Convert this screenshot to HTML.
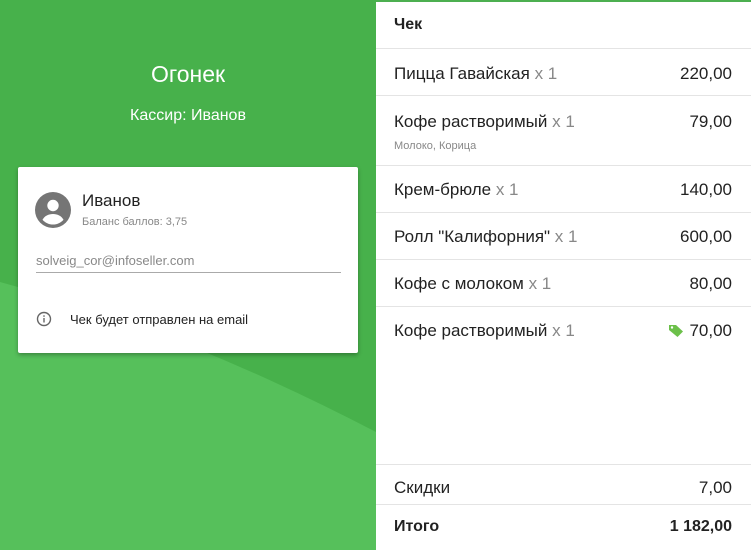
<!DOCTYPE html>
<html><head><meta charset="utf-8"><style>
*{margin:0;padding:0;box-sizing:border-box}
body{width:751px;height:550px;overflow:hidden;font-family:"Liberation Sans",sans-serif;position:relative;background:#fff}
.left{position:absolute;left:0;top:0;width:376px;height:550px;background:#47b14b;overflow:hidden}
.title{position:absolute;left:0;width:376px;text-align:center;color:#fff}
.card{position:absolute;left:18px;top:167px;width:340px;height:186px;background:#fff;border-radius:2px;box-shadow:0 2px 4px rgba(0,0,0,.3)}
.right{position:absolute;left:376px;top:0;width:375px;height:550px;background:#fff;border-top:2px solid #4caf50}
.row{position:absolute;left:0;width:375px;border-bottom:1px solid #e4e4e4}
.n{position:absolute;left:18px;font-size:17px;color:#222}
.n span{color:#888}
.p{position:absolute;right:19px;font-size:17px;color:#222}
</style></head><body>
<div class="left">
<svg width="376" height="550" style="position:absolute;left:0;top:0"><path d="M0 282 Q180 330 376 432 L376 550 L0 550Z" fill="#56c05b"/></svg>
<div class="title" style="top:61px;font-size:23px">Огонек</div>
<div class="title" style="top:107px;font-size:16px">Кассир: Иванов</div>
<div class="card">
<svg width="36" height="36" viewBox="0 0 24 24" style="position:absolute;left:17px;top:25px"><circle cx="12" cy="12" r="12" fill="#757575"/><circle cx="12" cy="9" r="3.8" fill="#fff"/><path d="M5 18.5c1.5-2.6 4.2-3.8 7-3.8s5.5 1.2 7 3.8c-1.8 2-4.3 3.2-7 3.2s-5.2-1.2-7-3.2z" fill="#fff"/></svg>
<div style="position:absolute;left:64px;top:24px;font-size:17px;color:#222">Иванов</div>
<div style="position:absolute;left:64px;top:49px;font-size:11px;color:#888">Баланс баллов: 3,75</div>
<div style="position:absolute;left:18px;top:86px;font-size:13px;color:#888">solveig_cor@infoseller.com</div>
<div style="position:absolute;left:18px;top:105px;width:305px;height:1px;background:#aaa"></div>
<svg width="16" height="16" viewBox="0 0 16 16" style="position:absolute;left:18px;top:144px"><circle cx="8" cy="8" r="6.5" fill="none" stroke="#666" stroke-width="1.4"/><rect x="7.3" y="7" width="1.4" height="4.5" fill="#666"/><rect x="7.3" y="4.3" width="1.4" height="1.5" fill="#666"/></svg>
<div style="position:absolute;left:52px;top:145px;font-size:13px;color:#222">Чек будет отправлен на email</div>
</div>
</div>
<div class="right">
<div class="row" style="top:0;height:47px"><div class="n" style="top:14px;font-weight:bold;font-size:16px">Чек</div></div>
<div class="row" style="top:47px;height:47px"><div class="n" style="top:15px">Пицца Гавайская <span>x 1</span></div><div class="p" style="top:15px">220,00</div></div>
<div class="row" style="top:94px;height:70px"><div class="n" style="top:16px">Кофе растворимый <span>x 1</span></div><div class="p" style="top:16px">79,00</div><div style="position:absolute;left:18px;top:44px;font-size:11px;color:#888">Молоко, Корица</div></div>
<div class="row" style="top:164px;height:47px"><div class="n" style="top:14px">Крем-брюле <span>x 1</span></div><div class="p" style="top:14px">140,00</div></div>
<div class="row" style="top:211px;height:47px"><div class="n" style="top:14px">Ролл "Калифорния" <span>x 1</span></div><div class="p" style="top:14px">600,00</div></div>
<div class="row" style="top:258px;height:47px"><div class="n" style="top:14px">Кофе с молоком <span>x 1</span></div><div class="p" style="top:14px">80,00</div></div>
<div class="row" style="top:305px;height:47px;border-bottom:none"><div class="n" style="top:14px">Кофе растворимый <span>x 1</span></div><div class="p" style="top:14px">70,00</div>
<svg width="16" height="14" viewBox="0 0 16 14" style="position:absolute;left:292px;top:17px"><path d="M1 1h7l7 6.5-5.5 5.5L1 6z" fill="#6cc04a" transform="rotate(0)"/><circle cx="4" cy="3.5" r="1.2" fill="#fff"/></svg></div>
<div class="row" style="top:462px;height:41px;border-top:1px solid #e4e4e4"><div class="n" style="top:13px">Скидки</div><div class="p" style="top:13px">7,00</div></div>
<div class="row" style="top:503px;height:47px;border-bottom:none"><div class="n" style="top:13px;font-weight:bold;font-size:16px">Итого</div><div class="p" style="top:13px;font-weight:bold;font-size:16px">1 182,00</div></div>
</div>
</body></html>
